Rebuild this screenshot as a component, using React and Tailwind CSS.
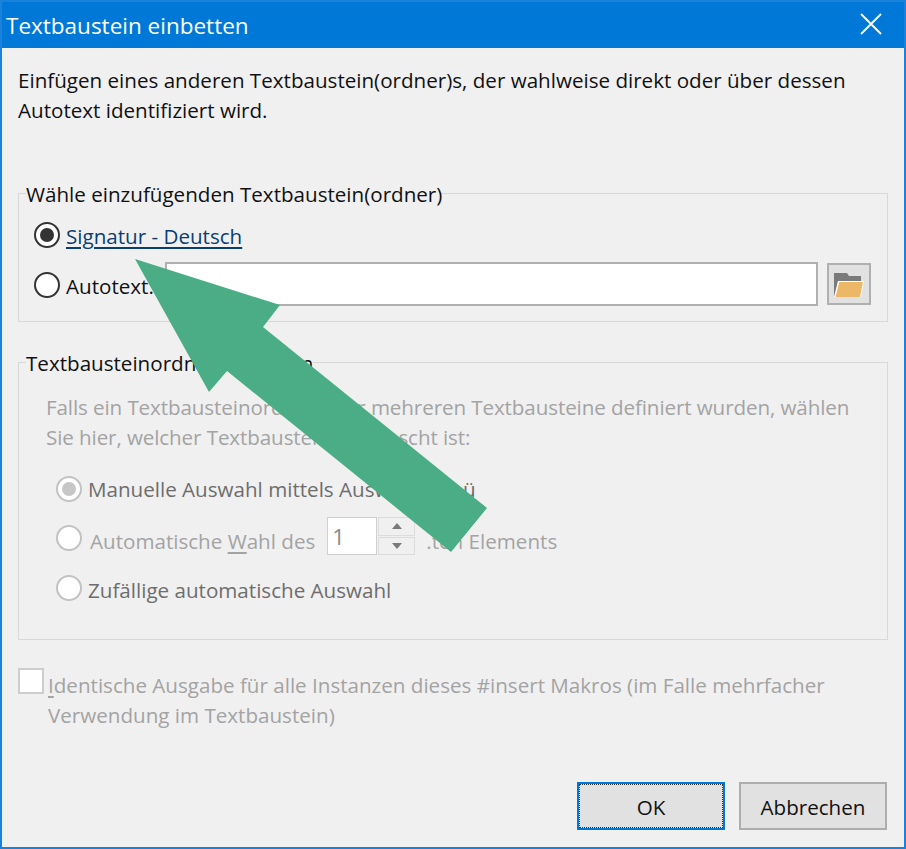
const FONT = "font-['Open_Sans','Noto_Sans',sans-serif]";

function Radio({ checked, disabled }) {
  return (
    <span
      className={`flex h-[26px] w-[26px] shrink-0 items-center justify-center rounded-full border-2 bg-white ${
        disabled ? 'border-[#c2c2c2]' : 'border-[#333333]'
      }`}
    >
      {checked && (
        <span className={`h-[14px] w-[14px] rounded-full ${disabled ? 'bg-[#c6c6c6]' : 'bg-[#333333]'}`} />
      )}
    </span>
  );
}

function FolderIcon() {
  return (
    <svg width="32" height="26" viewBox="0 0 32 26" aria-hidden="true">
      <path d="M1 2 L14 2 L16 5 L28 5 L28 11 L5 11 L2 25 L1 25 Z" fill="#7a7a7a" />
      <path d="M5 10 L31 10 L28 26 L1 26 Z" fill="#ffffff" />
      <path d="M6.2 11 L30 11 L27 26 L2.5 26 Z" fill="#ebb867" />
    </svg>
  );
}

export default function App() {
  return (
    <div className={`${FONT} relative flex h-[849px] w-[906px] flex-col overflow-hidden border-2 border-[#1a82da] bg-[#f0f0f0] text-[20.6px] leading-[30px] text-[#111111]`}>
      {/* Title bar */}
      <header className="flex h-[46px] shrink-0 items-center justify-between bg-[#0078d7] pl-1 pr-[22px] text-white">
        <span className="pt-[2px] text-[22.5px]">Textbaustein einbetten</span>
        <svg className="mb-[2px]" width="22" height="22" viewBox="0 0 22 22" aria-hidden="true">
          <path d="M1 1 L21 21 M21 1 L1 21" stroke="#ffffff" strokeWidth="1.8" fill="none" />
        </svg>
      </header>

      <div className="flex flex-1 flex-col px-4">
        <p className="mt-[17px]">
          Einfügen eines anderen Textbaustein(ordner)s, der wahlweise direkt oder über dessen
          <br />
          Autotext identifiziert wird.
        </p>

        {/* Auswahl */}
        <fieldset className="mt-[52px] h-[145px] border border-[#d8d8d8] px-[15px]">
          <legend className="-ml-2 pt-[2px] text-[#111111]">Wähle einzufügenden Textbaustein(ordner)</legend>
          <div className="mt-[9px] flex items-center gap-[6px]">
            <Radio checked />
            <a className="pt-[3px] text-[#0b3d73] underline underline-offset-[3px]">Signatur - Deutsch</a>
          </div>
          <div className="mt-[11px] flex items-center gap-[6px]">
            <span className="mt-[2px]">
              <Radio />
            </span>
            <span className="w-[93px] pt-[4px]">Autotext:</span>
            <div className="h-[44px] w-[653px] border-2 border-[#b0b0b0] bg-white" />
            <button type="button" className="ml-[3px] flex h-[42px] w-[44px] items-center justify-center border-2 border-[#b0b0b0] bg-[#e1e1e1]">
              <FolderIcon />
            </button>
          </div>
        </fieldset>

        {/* Optionen, disabled */}
        <fieldset className="mt-[24px] h-[294px] border border-[#d8d8d8] px-[27px]">
          <legend className="-ml-5 pt-[2px] text-[#111111]">Textbausteinordner-Optionen</legend>
          <p className="mt-[14px] tracking-[-0.1px] text-[#a3a3a3]">
            Falls ein Textbausteinordner oder mehreren Textbausteine definiert wurden, wählen
            <br />
            Sie hier, welcher Textbaustein gewünscht ist:
          </p>
          <div className="mt-[21px] ml-[10px] flex items-center gap-[6px] text-[#6d6d6d]">
            <Radio checked disabled />
            <span className="pt-px">Manuelle Auswahl mittels Auswahlmenü</span>
          </div>
          <div className="ml-[10px] mt-[13px] flex h-[38px] items-center text-[#a3a3a3]">
            <span className="mt-[4px]">
              <Radio disabled />
            </span>
            <span className="ml-2 pt-[10px]">
              Automatische <span className="underline underline-offset-[3px]">W</span>ahl des
            </span>
            <div className="ml-3 flex h-[38px] w-[50px] items-center border border-[#d0d0d0] bg-white pl-[4px] text-[22px] text-[#8a8a8a]">1</div>
            <div className="ml-px flex h-[38px] w-[37px] flex-col gap-px">
              <button type="button" className="flex flex-1 items-center justify-center border border-[#dcdcdc]">
                <span className="h-0 w-0 border-x-[5px] border-b-[6px] border-x-transparent border-b-[#7a7a7a]" />
              </button>
              <button type="button" className="flex flex-1 items-center justify-center border border-[#dcdcdc]">
                <span className="h-0 w-0 border-x-[5px] border-t-[6px] border-x-transparent border-t-[#7a7a7a]" />
              </button>
            </div>
            <span className="ml-[11px] pt-[10px]">.ten Elements</span>
          </div>
          <div className="ml-[10px] mt-[16px] flex items-center gap-[6px] text-[#6d6d6d]">
            <Radio disabled />
            <span className="pt-[4px]">Zufällige automatische Auswahl</span>
          </div>
        </fieldset>

        {/* Checkbox */}
        <div className="mt-[30px] flex items-start gap-1 text-[#a3a3a3]">
          <span className="-mt-[2px] h-[26px] w-[26px] shrink-0 border-2 border-[#cdcdcd] bg-white" />
          <p>
            <span className="underline underline-offset-[3px]">I</span>dentische Ausgabe für alle Instanzen dieses #insert Makros (im Falle mehrfacher
            <br />
            Verwendung im Textbaustein)
          </p>
        </div>

        {/* Buttons */}
        <div className="mt-auto mb-[17px] flex justify-end gap-[14px] pr-px">
          <button type="button" className="h-[48px] w-[148px] border-2 border-[#0078d7] bg-[#e1e1e1] pt-[1px] text-[#111111] outline-1 -outline-offset-3 outline-dotted outline-[#333333]">OK</button>
          <button type="button" className="h-[48px] w-[148px] border-2 border-[#adadad] bg-[#e1e1e1] pt-[1px] text-[#111111]">Abbrechen</button>
        </div>
      </div>

      {/* Annotation arrow drawn over the dialog */}
      <svg className="absolute -left-[2px] -top-[2px]" width="906" height="849" viewBox="0 0 906 849" aria-hidden="true">
        <polygon points="135,259 280,305 263,327 487,508 451,552 227,371 209,392" fill="#4bad85" />
      </svg>
    </div>
  );
}
